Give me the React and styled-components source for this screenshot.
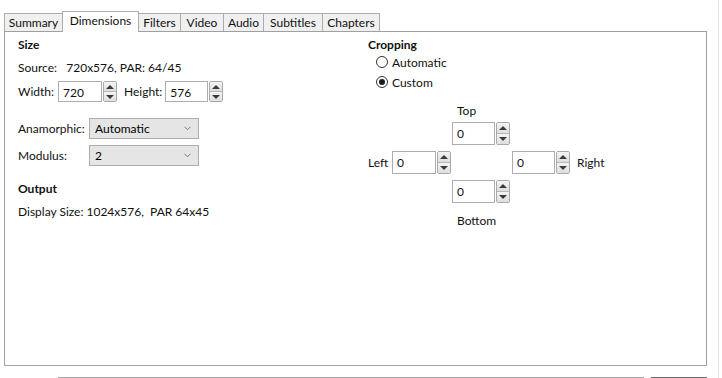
import React from "react";
import styled, { createGlobalStyle } from "styled-components";

const Global = createGlobalStyle`
  html, body { margin: 0; padding: 0; background: #fff; overflow: hidden; }
  body { font-family: Lato, "Noto Sans", sans-serif; font-size: 12px; color: #111; }
`;

const Window = styled.div`
  width: 719px;
  height: 378px;
  border-right: 1px solid #e4e4e4;
  padding-top: 11px;
  box-sizing: border-box;
  overflow: hidden;
`;

const TabRow = styled.div`
  display: flex;
  align-items: flex-end;
  margin-left: 4px;
  height: 20px;
`;

const Tab = styled.div`
  box-sizing: border-box;
  width: ${(p) => p.$w}px;
  height: ${(p) => (p.$active ? 21 : 18)}px;
  margin-bottom: ${(p) => (p.$active ? -1 : 0)}px;
  margin-left: ${(p) => (p.$first ? 0 : -1)}px;
  border: 1px solid #acacac;
  border-bottom: none;
  background: ${(p) => (p.$active ? "#fff" : "#f0f0f0")};
  position: relative;
  z-index: ${(p) => (p.$active ? 2 : 1)};
  display: flex;
  align-items: ${(p) => (p.$active ? "flex-start" : "center")};
  padding-top: ${(p) => (p.$active ? 2 : 0)}px;
  justify-content: center;
  line-height: 14px;
`;

const Panel = styled.div`
  box-sizing: border-box;
  margin-left: 4px;
  width: 703px;
  height: 335px;
  border: 1px solid #a0a0a0;
  background: #fff;
  padding: 5px 0 0 13px;
  display: grid;
  grid-template-columns: 350px 1fr;
  align-items: start;
`;

const Column = styled.div`
  display: flex;
  flex-direction: column;
`;

const Heading = styled.div`
  font-weight: 700;
  line-height: 16px;
  margin-top: ${(p) => p.$mt || 0}px;
`;

const Line = styled.div`
  line-height: 16px;
  margin-top: ${(p) => p.$mt || 0}px;
  white-space: pre;
`;

const FieldRow = styled.div`
  display: flex;
  align-items: center;
  margin-top: ${(p) => p.$mt || 0}px;
`;

const Label = styled.span`
  width: ${(p) => (p.$w ? `${p.$w}px` : "auto")};
  margin-right: ${(p) => p.$mr || 0}px;
  margin-left: ${(p) => p.$ml || 0}px;
  white-space: nowrap;
`;

const Spin = styled.div`
  display: flex;
  gap: 1px;
  height: ${(p) => p.$h}px;
`;

const SpinInput = styled.div`
  box-sizing: border-box;
  width: ${(p) => p.$w}px;
  height: 100%;
  border: 1px solid #abadb3;
  background: #fff;
  padding-left: 4px;
  display: flex;
  align-items: center;
  padding-top: 1px;
`;

const SpinButtons = styled.div`
  box-sizing: border-box;
  width: 14px;
  height: 100%;
  border: 1px solid #a9a9a9;
  border-radius: 2px;
  display: flex;
  flex-direction: column;
  overflow: hidden;
`;

const SpinBtn = styled.div`
  flex: 1;
  display: flex;
  align-items: center;
  justify-content: center;
  background: linear-gradient(#f4f4f4, #dedede);
  border-top: ${(p) => (p.$down ? "1px solid #b8b8b8" : "none")};
  &::after {
    content: "";
    width: 0;
    height: 0;
    border-left: 4px solid transparent;
    border-right: 4px solid transparent;
    ${(p) =>
      p.$down
        ? "border-top: 4px solid #3a3a3a;"
        : "border-bottom: 4px solid #3a3a3a;"}
  }
`;

const Select = styled.div`
  box-sizing: border-box;
  width: 110px;
  height: 21px;
  border: 1px solid #adadad;
  background: #e5e5e5;
  display: flex;
  align-items: center;
  justify-content: space-between;
  padding: 0 7px 0 5px;
  color: #000;
`;

const RadioRow = styled.div`
  display: flex;
  align-items: center;
  height: 16px;
  margin-left: 8px;
  margin-top: ${(p) => p.$mt || 0}px;
`;

const RadioCircle = styled.span`
  box-sizing: border-box;
  width: 12px;
  height: 12px;
  border-radius: 50%;
  border: 1px solid #333;
  background: #fff;
  margin-right: 4px;
  display: flex;
  align-items: center;
  justify-content: center;
  &::after {
    content: "";
    width: 6px;
    height: 6px;
    border-radius: 50%;
    background: ${(p) => (p.$on ? "#1a1a1a" : "transparent")};
  }
`;

const CropGrid = styled.div`
  display: grid;
  grid-template-columns: 24px 60px 60px 60px auto;
  grid-template-rows: 19px 29px 29px 33px 16px;
  margin-top: 13px;
  align-items: start;
`;

const Cell = styled.div`
  grid-column: ${(p) => p.$c};
  grid-row: ${(p) => p.$r};
  padding-left: ${(p) => p.$pl || 0}px;
  line-height: ${(p) => p.$lh || 16}px;
`;

const Footer = styled.div`
  display: flex;
  margin-top: 11px;
`;

const FooterBar = styled.div`
  box-sizing: border-box;
  height: 23px;
  margin-left: ${(p) => p.$ml}px;
  width: ${(p) => p.$w}px;
  border-top: 1px solid ${(p) => p.$c};
`;

function Chevron() {
  return (
    <svg width="7" height="5" viewBox="0 0 7 5">
      <path d="M0.5 0.8 L3.5 3.8 L6.5 0.8" fill="none" stroke="#7a7a7a" strokeWidth="1" />
    </svg>
  );
}

function SpinBox({ value, w, h }) {
  return (
    <Spin $h={h}>
      <SpinInput $w={w}>{value}</SpinInput>
      <SpinButtons>
        <SpinBtn />
        <SpinBtn $down />
      </SpinButtons>
    </Spin>
  );
}

const tabs = [
  ["Summary", 59],
  ["Dimensions", 77],
  ["Filters", 43],
  ["Video", 44],
  ["Audio", 41],
  ["Subtitles", 60],
  ["Chapters", 58],
];

export default function App() {
  return (
    <>
      <Global />
      <Window>
        <TabRow>
          {tabs.map(([t, w], i) => (
            <Tab key={t} $w={w} $first={i === 0} $active={t === "Dimensions"}>
              {t}
            </Tab>
          ))}
        </TabRow>
        <Panel>
          <Column>
            <Heading>Size</Heading>
            <Line $mt={7}>{"Source:   720x576, PAR: 64/45"}</Line>
            <FieldRow $mt={5}>
              <Label $w={40}>Width:</Label>
              <SpinBox value="720" w={44} h={21} />
              <Label $ml={7} $mr={3}>Height:</Label>
              <SpinBox value="576" w={43} h={21} />
            </FieldRow>
            <FieldRow $mt={16}>
              <Label $w={71}>Anamorphic:</Label>
              <Select>
                <span>Automatic</span>
                <Chevron />
              </Select>
            </FieldRow>
            <FieldRow $mt={6}>
              <Label $w={71}>Modulus:</Label>
              <Select>
                <span>2</span>
                <Chevron />
              </Select>
            </FieldRow>
            <Heading $mt={15}>Output</Heading>
            <Line $mt={7}>{"Display Size: 1024x576,  PAR 64x45"}</Line>
          </Column>
          <Column>
            <Heading>Cropping</Heading>
            <RadioRow $mt={1}>
              <RadioCircle />
              Automatic
            </RadioRow>
            <RadioRow $mt={4}>
              <RadioCircle $on />
              Custom
            </RadioRow>
            <CropGrid>
              <Cell $c={3} $r={1} $pl={5}>Top</Cell>
              <Cell $c={3} $r={2}>
                <SpinBox value="0" w={43} h={23} />
              </Cell>
              <Cell $c={1} $r={3} $lh={23}>Left</Cell>
              <Cell $c={2} $r={3}>
                <SpinBox value="0" w={44} h={23} />
              </Cell>
              <Cell $c={4} $r={3}>
                <SpinBox value="0" w={43} h={23} />
              </Cell>
              <Cell $c={5} $r={3} $pl={5} $lh={23}>Right</Cell>
              <Cell $c={3} $r={4}>
                <SpinBox value="0" w={43} h={23} />
              </Cell>
              <Cell $c={3} $r={5} $pl={5}>Bottom</Cell>
            </CropGrid>
          </Column>
        </Panel>
        <Footer>
          <FooterBar $ml={58} $w={586} $c="#a8a8a8" />
          <FooterBar $ml={7} $w={56} $c="#6a6a6a" />
        </Footer>
      </Window>
    </>
  );
}
